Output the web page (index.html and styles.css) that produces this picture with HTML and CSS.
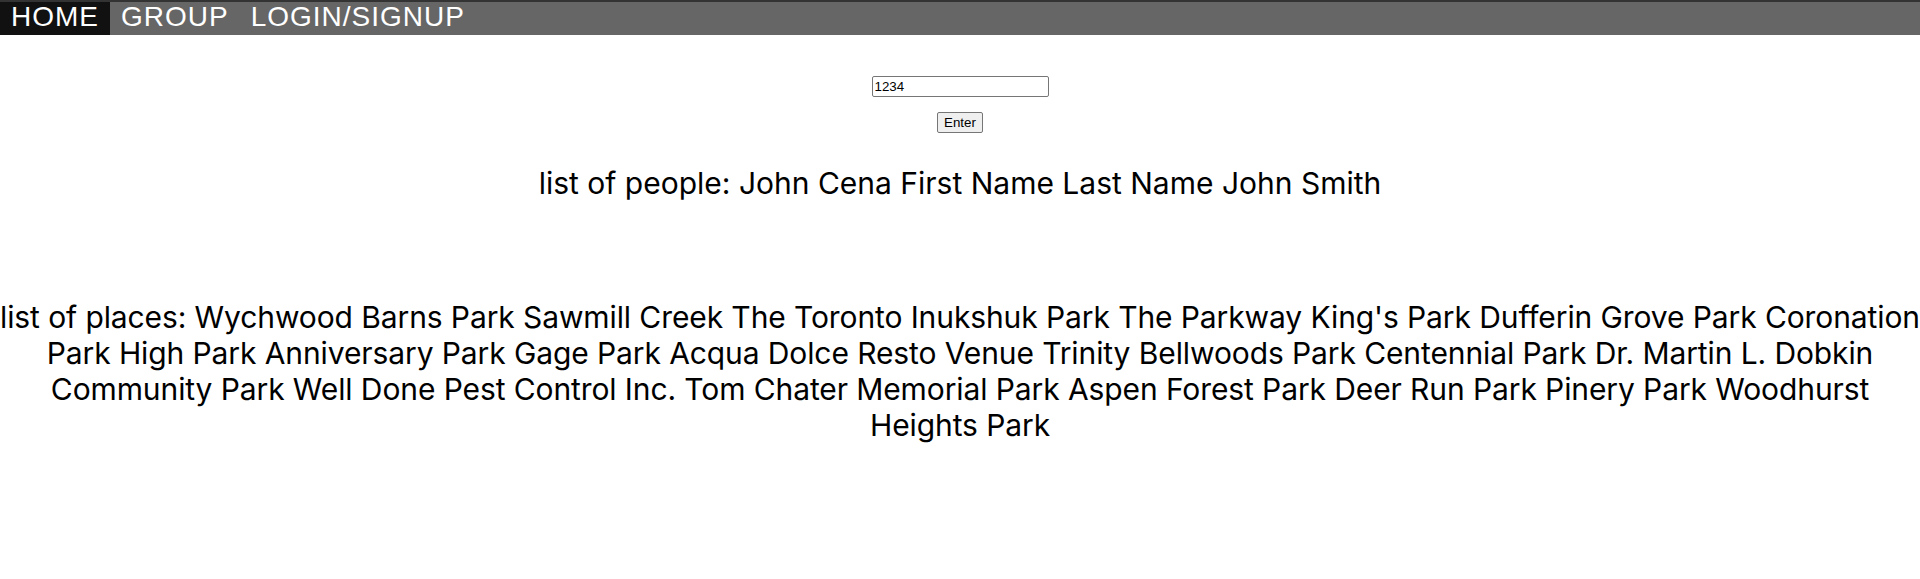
FILE: index.html
```html
<!DOCTYPE html>
<html>
<head>
<meta charset="utf-8">
<link rel="stylesheet" href="styles.css">
</head>
<body>
<nav class="topnav">
  <a class="nav-link active" href="#">HOME</a>
  <a class="nav-link" href="#">GROUP</a>
  <a class="nav-link" href="#">LOGIN/SIGNUP</a>
</nav>
<main class="content">
  <form class="code-form">
    <input class="code-input" type="text" value="1234">
    <button class="enter-btn" type="button">Enter</button>
  </form>
  <p class="people">list of people: John Cena First Name Last Name John Smith</p>
  <p class="places">list of places: Wychwood Barns Park Sawmill Creek The Toronto Inukshuk Park The Parkway King's Park Dufferin Grove Park Coronation Park High Park Anniversary Park Gage Park Acqua Dolce Resto Venue Trinity Bellwoods Park Centennial Park Dr. Martin L. Dobkin Community Park Well Done Pest Control Inc. Tom Chater Memorial Park Aspen Forest Park Deer Run Park Pinery Park Woodhurst Heights Park</p>
</main>
</body>
</html>
```
FILE: styles.css
```css
html, body {
  margin: 0;
  padding: 0;
  background: #ffffff;
}
body {
  font-family: Inter, "Noto Sans", sans-serif;
  color: #000;
}
.topnav {
  display: flex;
  background: #666666;
  border-top: 2px solid #333333;
}
.nav-link {
  font-family: "Liberation Sans", Arial, sans-serif;
  font-size: 28px;
  letter-spacing: 1px;
  line-height: 30px;
  color: #ffffff;
  text-decoration: none;
  padding: 0 11px 3px;
}
.nav-link.active {
  background: #111111;
}
.content {
  text-align: center;
}
.code-form {
  display: flex;
  flex-direction: column;
  align-items: center;
  gap: 15px;
  padding-top: 41px;
}
.code-input {
  box-sizing: border-box;
  width: 177px;
  height: 21px;
  font-family: "Liberation Sans", Arial, sans-serif;
  font-size: 13.33px;
  padding: 1px 2px;
  border: 1px solid #767676;
  border-radius: 2px;
  margin: 0;
}
.enter-btn {
  box-sizing: border-box;
  width: 46px;
  height: 21px;
  font-family: "Liberation Sans", Arial, sans-serif;
  font-size: 13.33px;
  padding: 1px 6px;
  border: 1px solid #767676;
  border-radius: 2px;
  background: #efefef;
  color: #000;
  margin: 0;
}
.people {
  font-size: 30px;
  margin: 32px 0 0;
}
.places {
  font-size: 30px;
  letter-spacing: -0.1px;
  margin: 98px 0 0;
}
```
